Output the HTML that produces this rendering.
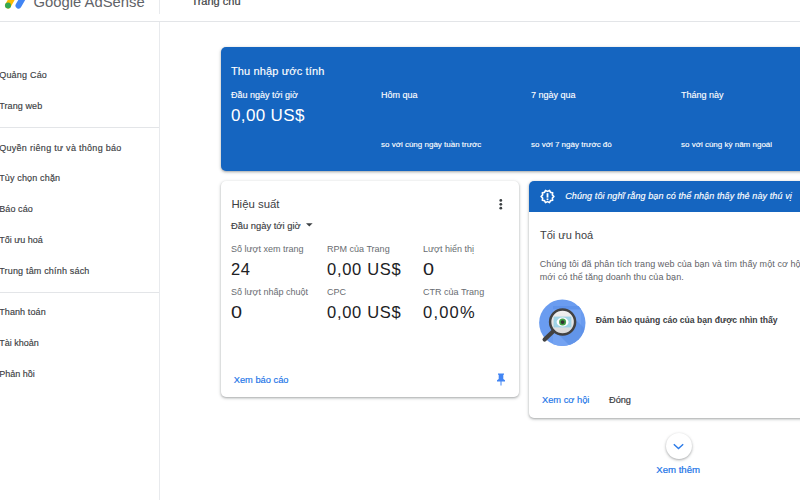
<!DOCTYPE html>
<html><head><meta charset="utf-8">
<style>
*{margin:0;padding:0;box-sizing:border-box}
html,body{width:800px;height:500px;overflow:hidden;background:#fff;font-family:"Liberation Sans",sans-serif;color:#3c4043}
.a{position:absolute;white-space:nowrap}
#hdr{position:absolute;left:0;top:0;width:800px;height:22px;border-bottom:1px solid #e3e5e8}
#vsep1{position:absolute;left:159px;top:0;width:1px;height:14px;background:#e8eaed}
#vsep2{position:absolute;left:159px;top:22px;width:1px;height:478px;background:#e8eaed}
.hsep{position:absolute;left:0;width:159px;height:1px;background:#e3e5e8}
#blue{position:absolute;left:221px;top:47px;width:600px;height:124px;background:#1565c0;border-radius:5px;box-shadow:0 1px 2px rgba(60,64,67,.3),0 1px 3px 1px rgba(60,64,67,.15)}
.card{position:absolute;background:#fff;border-radius:5px;box-shadow:0 1px 2px rgba(60,64,67,.3),0 1px 3px 1px rgba(60,64,67,.15)}
</style></head><body>
<div id="hdr"></div>
<div id="vsep1"></div>
<div id="vsep2"></div>
<div class="hsep" style="top:127px"></div>
<div class="hsep" style="top:292px"></div>
<div id="blue"></div>
<div class="card" style="left:221px;top:181px;width:298px;height:216px"></div>
<div class="card" style="left:529px;top:181px;width:290px;height:236.6px;overflow:hidden"><div style="position:absolute;left:0;top:0;width:100%;height:31px;background:#1565c0"></div></div>

<svg class="a" style="left:0;top:0" width="40" height="16" viewBox="0 0 40 16">
<line x1="8" y1="5.5" x2="13.5" y2="-4" stroke="#fbbc04" stroke-width="6" stroke-linecap="round"/>
<circle cx="8" cy="5.5" r="3" fill="#34a853"/>
<line x1="18.5" y1="5.6" x2="24" y2="-4" stroke="#4285f4" stroke-width="6" stroke-linecap="round"/>
</svg>
<!-- kebab -->
<svg class="a" style="left:496px;top:196px" width="10" height="16" viewBox="0 0 10 16"><circle cx="4.8" cy="4.4" r="1.4" fill="#3c4043"/><circle cx="4.8" cy="8.3" r="1.4" fill="#3c4043"/><circle cx="4.8" cy="12.2" r="1.4" fill="#3c4043"/></svg>
<!-- dropdown triangle -->
<svg class="a" style="left:305px;top:222.4px" width="9" height="6" viewBox="0 0 9 6"><path d="M1 1.2 L7.6 1.2 L4.3 4.6 Z" fill="#3c4043"/></svg>
<!-- pin -->
<svg class="a" style="left:494px;top:371px" width="14" height="16" viewBox="0 0 14 16">
<path d="M4 2.4 H10 V3.6 L9.3 4 V8 L11 9.2 V10.6 H7.5 V14.6 H6.5 V10.6 H3 V9.2 L4.7 8 V4 L4 3.6 Z" fill="#4285f4"/>
</svg>
<!-- xem them button -->
<div class="a" style="left:665.5px;top:433px;width:26px;height:26px;border-radius:50%;background:#fff;box-shadow:0 1px 3px rgba(60,64,67,.35),0 1px 2px rgba(60,64,67,.15)"></div>
<svg class="a" style="left:672px;top:442px" width="13" height="9" viewBox="0 0 13 9"><path d="M1.8 2.2 L6.5 6.6 L11.2 2.2" fill="none" stroke="#2a7ae8" stroke-width="1.4"/></svg>
<svg class="a" style="left:539.6px;top:189.1px" width="15" height="15" viewBox="0 0 15 15">
<path d="M13.90 7.50 L12.35 9.08 L12.68 11.26 L10.50 11.63 L9.48 13.59 L7.50 12.60 L5.52 13.59 L4.50 11.63 L2.32 11.26 L2.65 9.08 L1.10 7.50 L2.65 5.92 L2.32 3.74 L4.50 3.37 L5.52 1.41 L7.50 2.40 L9.48 1.41 L10.50 3.37 L12.68 3.74 L12.35 5.92Z" fill="none" stroke="#fff" stroke-width="1.6" stroke-linejoin="round"/>
<rect x="6.6" y="4.2" width="1.8" height="4.4" fill="#fff"/><rect x="6.6" y="9.5" width="1.8" height="1.6" fill="#fff"/>
</svg>
<svg class="a" style="left:536px;top:296px" width="54" height="54" viewBox="0 0 54 54">
<defs><clipPath id="cc"><circle cx="26.3" cy="26.8" r="23.2"/></clipPath>
<clipPath id="lc"><circle cx="26.6" cy="26" r="12.4"/></clipPath>
<linearGradient id="lg" x1="0" y1="0" x2="0" y2="1"><stop offset="0" stop-color="#f1f1f1"/><stop offset="1" stop-color="#d9d9d9"/></linearGradient></defs>
<circle cx="26.3" cy="26.8" r="23.2" fill="#6a9cf0"/>
<g clip-path="url(#cc)">
<path d="M17 10 H45 V54 H17 Z" fill="#74a3f2"/>
<path d="M17 10 H45 V13.5 H17 Z" fill="#5f93ea"/>
<path d="M34 18 L54 38 L54 54 L38 54 L18 34 Z" fill="#5b8ee6" opacity="0.7"/>
</g>
<circle cx="26.6" cy="26" r="12.4" fill="url(#lg)"/>
<g clip-path="url(#lc)">
<rect x="17.6" y="20.6" width="17.8" height="10.8" fill="#9fd3e6"/>
</g>
<ellipse cx="26.6" cy="26.1" rx="6" ry="4.5" fill="#fff"/>
<circle cx="26.6" cy="26.1" r="3.5" fill="#43a047"/>
<circle cx="26.6" cy="26.1" r="1.9" fill="#333"/>
<circle cx="26.6" cy="26" r="12.5" fill="none" stroke="#424242" stroke-width="2.5"/>
<line x1="8.6" y1="43.6" x2="17" y2="35.4" stroke="#424242" stroke-width="4.2" stroke-linecap="round"/>
</svg>
<div class="a" style="left:33.60px;top:-4.63px;font-size:14.8px;line-height:14.8px;color:#5f6368">Google AdSense</div>
<div class="a" style="left:191.40px;top:-4.41px;font-size:11px;line-height:11px;color:#3c4043;-webkit-text-stroke:0.2px #3c4043">Trang chủ</div>
<div class="a" style="left:-0.80px;top:71.28px;font-size:9px;line-height:9px;color:#3c4043;letter-spacing:0.2px;-webkit-text-stroke:0.15px #3c4043">Quảng Cáo</div>
<div class="a" style="left:-0.80px;top:102.38px;font-size:9px;line-height:9px;color:#3c4043;letter-spacing:0.1px;-webkit-text-stroke:0.15px #3c4043">Trang web</div>
<div class="a" style="left:-0.80px;top:143.58px;font-size:9px;line-height:9px;color:#3c4043;letter-spacing:0.29px;-webkit-text-stroke:0.15px #3c4043">Quyền riêng tư và thông báo</div>
<div class="a" style="left:-0.80px;top:174.18px;font-size:9px;line-height:9px;color:#3c4043;letter-spacing:0.15px;-webkit-text-stroke:0.15px #3c4043">Tùy chọn chặn</div>
<div class="a" style="left:-0.80px;top:204.68px;font-size:9px;line-height:9px;color:#3c4043;letter-spacing:0.1px;-webkit-text-stroke:0.15px #3c4043">Báo cáo</div>
<div class="a" style="left:-0.80px;top:235.78px;font-size:9px;line-height:9px;color:#3c4043;-webkit-text-stroke:0.15px #3c4043">Tối ưu hoá</div>
<div class="a" style="left:-0.80px;top:266.98px;font-size:9px;line-height:9px;color:#3c4043;letter-spacing:0.18px;-webkit-text-stroke:0.15px #3c4043">Trung tâm chính sách</div>
<div class="a" style="left:-0.80px;top:308.08px;font-size:9px;line-height:9px;color:#3c4043;letter-spacing:0.1px;-webkit-text-stroke:0.15px #3c4043">Thanh toán</div>
<div class="a" style="left:-0.80px;top:339.18px;font-size:9px;line-height:9px;color:#3c4043;-webkit-text-stroke:0.15px #3c4043">Tài khoản</div>
<div class="a" style="left:-0.80px;top:370.08px;font-size:9px;line-height:9px;color:#3c4043;-webkit-text-stroke:0.15px #3c4043">Phản hồi</div>
<div class="a" style="left:230.90px;top:66.09px;font-size:11px;line-height:11px;color:#ffffff;letter-spacing:0.15px;-webkit-text-stroke:0.15px #fff">Thu nhập ước tính</div>
<div class="a" style="left:231.00px;top:91.18px;font-size:9px;line-height:9px;color:#ffffff;-webkit-text-stroke:0.12px #fff">Đầu ngày tới giờ</div>
<div class="a" style="left:231.00px;top:106.71px;font-size:17px;line-height:17px;color:#ffffff;letter-spacing:0.35px">0,00 US$</div>
<div class="a" style="left:381.00px;top:90.78px;font-size:9px;line-height:9px;color:#ffffff;-webkit-text-stroke:0.12px #fff">Hôm qua</div>
<div class="a" style="left:381.00px;top:141.23px;font-size:8px;line-height:8px;color:#ffffff;-webkit-text-stroke:0.12px #fff">so với cùng ngày tuần trước</div>
<div class="a" style="left:531.00px;top:90.78px;font-size:9px;line-height:9px;color:#ffffff;-webkit-text-stroke:0.12px #fff">7 ngày qua</div>
<div class="a" style="left:531.00px;top:141.23px;font-size:8px;line-height:8px;color:#ffffff;-webkit-text-stroke:0.12px #fff">so với 7 ngày trước đó</div>
<div class="a" style="left:681.00px;top:90.78px;font-size:9px;line-height:9px;color:#ffffff;-webkit-text-stroke:0.12px #fff">Tháng này</div>
<div class="a" style="left:681.00px;top:141.23px;font-size:8px;line-height:8px;color:#ffffff;-webkit-text-stroke:0.12px #fff">so với cùng kỳ năm ngoái</div>
<div class="a" style="left:231.40px;top:199.15px;font-size:11.4px;line-height:11.4px;color:#3c4043">Hiệu suất</div>
<div class="a" style="left:231.00px;top:220.64px;font-size:9.4px;line-height:9.4px;color:#3c4043;-webkit-text-stroke:0.15px #3c4043">Đầu ngày tới giờ</div>
<div class="a" style="left:231.00px;top:243.97px;font-size:9.6px;line-height:9.6px;color:#686c71;transform:scaleX(0.94);transform-origin:0 0">Số lượt xem trang</div>
<div class="a" style="left:231.00px;top:260.63px;font-size:16.5px;line-height:16.5px;color:#202124;letter-spacing:0.5px">24</div>
<div class="a" style="left:327.00px;top:243.97px;font-size:9.6px;line-height:9.6px;color:#686c71;transform:scaleX(0.94);transform-origin:0 0">RPM của Trang</div>
<div class="a" style="left:327.00px;top:260.63px;font-size:16.5px;line-height:16.5px;color:#202124;letter-spacing:0.7px">0,00 US$</div>
<div class="a" style="left:423.00px;top:243.97px;font-size:9.6px;line-height:9.6px;color:#686c71;transform:scaleX(0.94);transform-origin:0 0">Lượt hiển thị</div>
<div class="a" style="left:423.00px;top:260.63px;font-size:16.5px;line-height:16.5px;color:#202124;transform:scaleX(1.2);transform-origin:0 0">0</div>
<div class="a" style="left:231.00px;top:286.97px;font-size:9.6px;line-height:9.6px;color:#686c71;transform:scaleX(0.94);transform-origin:0 0">Số lượt nhấp chuột</div>
<div class="a" style="left:231.00px;top:303.83px;font-size:16.5px;line-height:16.5px;color:#202124;transform:scaleX(1.2);transform-origin:0 0">0</div>
<div class="a" style="left:327.00px;top:286.97px;font-size:9.6px;line-height:9.6px;color:#686c71;transform:scaleX(0.94);transform-origin:0 0">CPC</div>
<div class="a" style="left:327.00px;top:303.83px;font-size:16.5px;line-height:16.5px;color:#202124;letter-spacing:0.7px">0,00 US$</div>
<div class="a" style="left:423.00px;top:286.97px;font-size:9.6px;line-height:9.6px;color:#686c71;transform:scaleX(0.94);transform-origin:0 0">CTR của Trang</div>
<div class="a" style="left:423.00px;top:303.83px;font-size:16.5px;line-height:16.5px;color:#202124;letter-spacing:1.2px">0,00%</div>
<div class="a" style="left:233.75px;top:376.03px;font-size:9.3px;line-height:9.3px;color:#1a73e8;-webkit-text-stroke:0.15px #1a73e8">Xem báo cáo</div>
<div class="a" style="left:565.20px;top:192.08px;font-size:9px;line-height:9px;color:#ffffff;font-style:italic;letter-spacing:0.1px;-webkit-text-stroke:0.15px #fff">Chúng tôi nghĩ rằng bạn có thể nhận thấy thẻ này thú vị</div>
<div class="a" style="left:540.00px;top:230.29px;font-size:11px;line-height:11px;color:#3c4043">Tối ưu hoá</div>
<div class="a" style="left:539.75px;top:260.08px;font-size:9px;line-height:9px;color:#5f6368;letter-spacing:0.07px">Chúng tôi đã phân tích trang web của bạn và tìm thấy một cơ hội</div>
<div class="a" style="left:539.75px;top:273.18px;font-size:9px;line-height:9px;color:#5f6368;letter-spacing:0.06px">mới có thể tăng doanh thu của bạn.</div>
<div class="a" style="left:595.80px;top:315.82px;font-size:8.6px;line-height:8.6px;color:#3c4043;font-weight:700">Đảm bảo quảng cáo của bạn được nhìn thấy</div>
<div class="a" style="left:542.00px;top:396.23px;font-size:9.3px;line-height:9.3px;color:#1a73e8;-webkit-text-stroke:0.15px #1a73e8">Xem cơ hội</div>
<div class="a" style="left:609.00px;top:396.31px;font-size:9.2px;line-height:9.2px;color:#3c4043;-webkit-text-stroke:0.2px #3c4043">Đóng</div>
<div class="a" style="left:656.25px;top:464.97px;font-size:9.6px;line-height:9.6px;color:#1a73e8;-webkit-text-stroke:0.2px #1a73e8">Xem thêm</div>

</body></html>
